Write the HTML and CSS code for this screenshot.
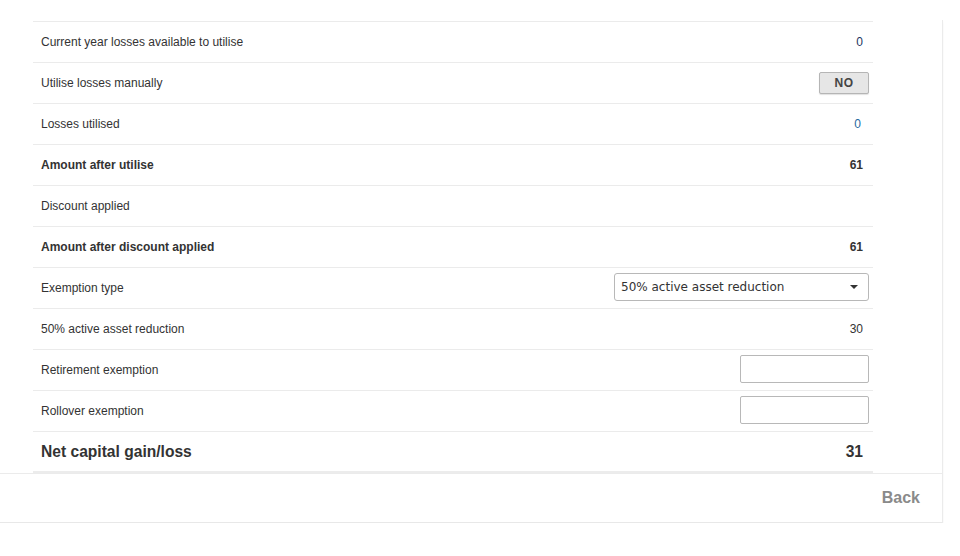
FILE: index.html
```html
<!DOCTYPE html>
<html>
<head>
<meta charset="utf-8">
<link rel="stylesheet" href="styles.css">
</head>
<body>
<div class="panel">
  <div class="rows">
    <div class="row"><span class="label">Current year losses available to utilise</span><span class="value val-dark">0</span></div>
    <div class="row"><span class="label">Utilise losses manually</span><button class="toggle">NO</button></div>
    <div class="row"><span class="label">Losses utilised</span><span class="value val-link">0</span></div>
    <div class="row bold"><span class="label">Amount after utilise</span><span class="value">61</span></div>
    <div class="row"><span class="label">Discount applied</span><span class="value"></span></div>
    <div class="row bold"><span class="label">Amount after discount applied</span><span class="value">61</span></div>
    <div class="row"><span class="label">Exemption type</span>
      <div class="select"><span>50% active asset reduction</span><span class="caret"></span></div>
    </div>
    <div class="row"><span class="label">50% active asset reduction</span><span class="value">30</span></div>
    <div class="row"><span class="label">Retirement exemption</span><input class="field" type="text"></div>
    <div class="row"><span class="label">Rollover exemption</span><input class="field" type="text"></div>
    <div class="row total"><span class="label">Net capital gain/loss</span><span class="value">31</span></div>
  </div>
  <div class="footer"><span class="back">Back</span></div>
</div>
</body>
</html>
```
FILE: styles.css
```css
html, body {
  margin: 0;
  padding: 0;
  background: #fff;
}
body {
  font-family: "Liberation Sans", Arial, sans-serif;
  font-size: 12px;
  color: #333;
}
.panel {
  width: 942px;
  margin-top: 20px;
  border-right: 1px solid #ebebeb;
  border-bottom: 1px solid #e8e8e8;
  box-shadow: 0 2px 2px rgba(0, 0, 0, 0.05);
  background: #fff;
}
.rows {
  padding: 1px 69px 0 33px;
}
.row {
  display: flex;
  align-items: center;
  justify-content: space-between;
  height: 40px;
  border-top: 1px solid #ebebeb;
  padding: 0 10px 0 8px;
}
.row.bold {
  font-weight: bold;
}
.value {
  text-align: right;
}
.val-dark {
  color: #1d3560;
  margin-right: 0;
}
.val-link {
  color: #2568a0;
  margin-right: 2px;
}
.toggle {
  width: 50px;
  height: 22px;
  margin-right: -6px;
  padding: 0;
  background: #e6e6e6;
  border: 1px solid #b5b5b5;
  border-radius: 2px;
  box-shadow: 0 1px 1px rgba(0, 0, 0, 0.12);
  font-family: "Liberation Sans", Arial, sans-serif;
  font-size: 12px;
  font-weight: bold;
  color: #444;
  letter-spacing: 0.5px;
}
.select {
  box-sizing: border-box;
  width: 255px;
  height: 28px;
  margin-right: -6px;
  margin-bottom: 2px;
  border: 1px solid #b8b8b8;
  border-radius: 3px;
  display: flex;
  align-items: center;
  justify-content: space-between;
  padding: 0 10px 0 6px;
  font-family: "DejaVu Sans", Verdana, sans-serif;
  font-size: 12px;
  color: #333;
}
.caret {
  width: 0;
  height: 0;
  border-left: 4px solid transparent;
  border-right: 4px solid transparent;
  border-top: 4px solid #333;
}
.field {
  box-sizing: border-box;
  width: 129px;
  height: 28px;
  margin-right: -6px;
  margin-bottom: 2px;
  border: 1px solid #b8b8b8;
  border-radius: 2px;
  padding: 0 6px;
  background: #fff;
}
.row.total {
  height: 39px;
  border-bottom: 2px solid #ececec;
  font-size: 15.6px;
  font-weight: bold;
}
.footer {
  height: 48px;
  border-top: 1px solid #ebebeb;
  display: flex;
  align-items: center;
  justify-content: flex-end;
  padding-right: 22px;
}
.back {
  font-size: 16px;
  font-weight: bold;
  color: #8a8a8a;
}
```
